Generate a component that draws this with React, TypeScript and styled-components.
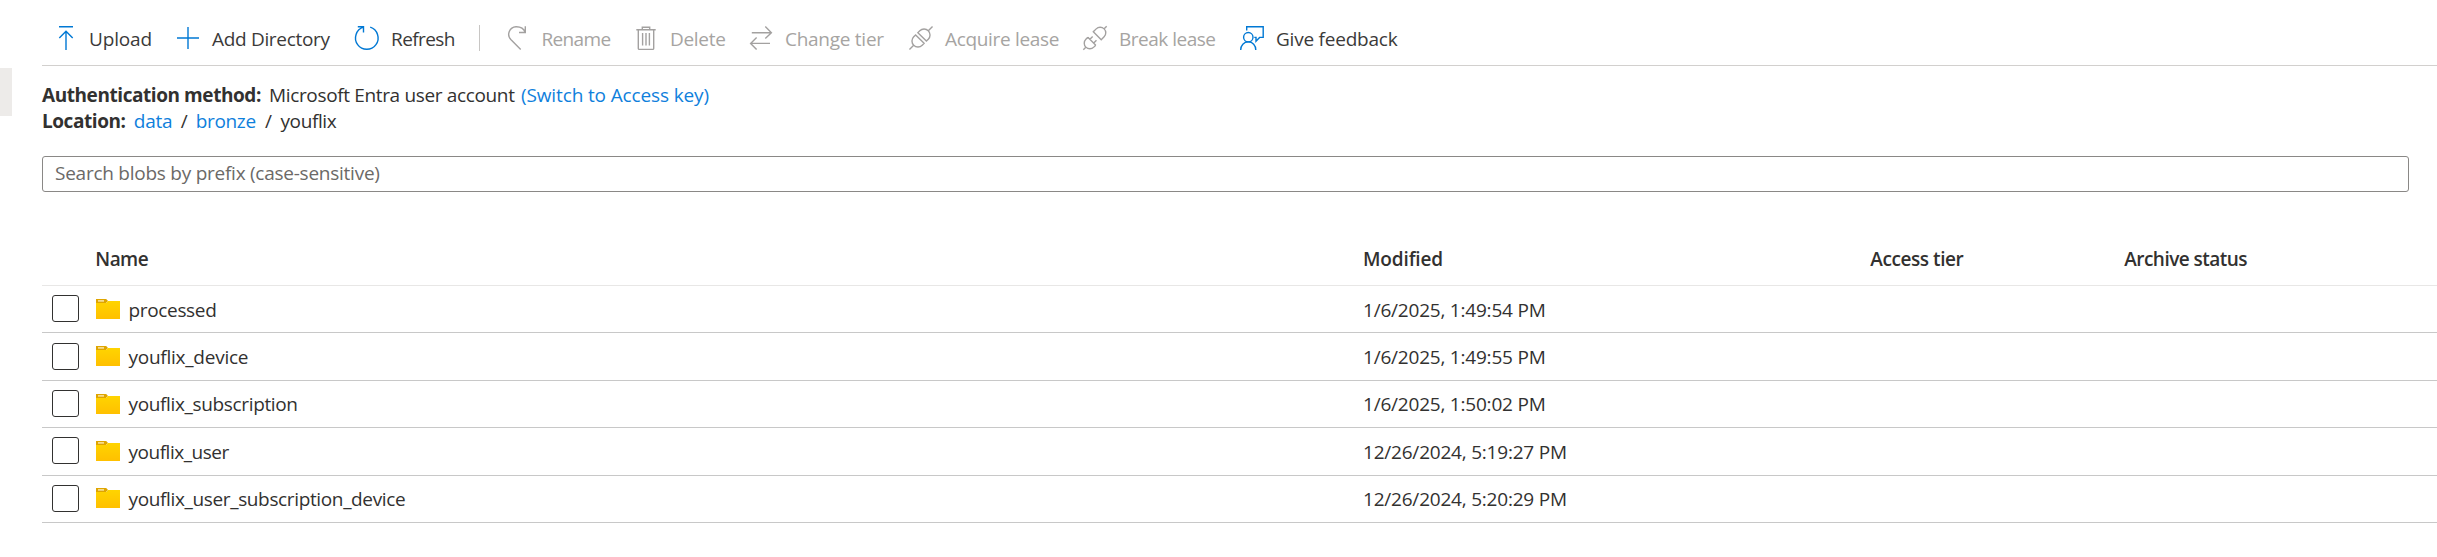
import React from 'react';
import styled, { createGlobalStyle } from 'styled-components';

const GlobalStyle = createGlobalStyle`
  * { box-sizing: border-box; }
  body {
    margin: 0;
    background: #fff;
    color: #323130;
    font: 400 19px/26px 'Open Sans', 'Noto Sans', sans-serif;
    overflow: hidden;
  }
`;

const Page = styled.div`
  display: flex;
  height: 557px;
`;

const Gutter = styled.div`
  flex: 0 0 42px;
  padding-top: 68px;
`;

const CollapseHandle = styled.div`
  width: 12px;
  height: 48px;
  background: #edebe9;
`;

const Content = styled.main`
  flex: 1;
  min-width: 0;
`;

const Label = styled.span<{ $track?: number }>`
  white-space: nowrap;
  letter-spacing: ${(p) => p.$track ?? -0.35}px;
`;

const Toolbar = styled.div`
  display: flex;
  align-items: center;
  height: 66px;
  padding: 11px 0 0 11px;
  border-bottom: 1px solid #d2d0ce;
`;

const Action = styled.div<{ $width: number; $disabled?: boolean }>`
  display: flex;
  align-items: center;
  gap: 12px;
  flex: 0 0 ${(p) => p.$width}px;
  color: ${(p) => (p.$disabled ? '#a6a4a2' : '#3b3a39')};
  ${Label} { padding-top: 1px; }
`;

const ActionIcon = styled.svg<{ $disabled?: boolean }>`
  flex: none;
  width: 24px;
  height: 24px;
  fill: none;
  stroke: ${(p) => (p.$disabled ? '#a3a1a0' : '#0078d4')};
  stroke-width: 1.4;
  overflow: visible;
`;

const Divider = styled.div`
  flex: none;
  width: 1px;
  height: 26px;
  margin-right: 25.5px;
  background: #c8c6c4;
`;

const Info = styled.section`
  padding-top: 16px;
`;

const InfoLine = styled.div`
  display: flex;
  height: 26px;
`;

const Segment = styled(Label)<{ $width?: number; $kind?: 'title' | 'link' }>`
  flex: 0 0 ${(p) => (p.$width ? `${p.$width}px` : 'auto')};
  font-weight: ${(p) => (p.$kind === 'title' ? 700 : 400)};
  color: ${(p) => (p.$kind === 'link' ? '#0f80dc' : '#323130')};
`;

const Search = styled.div`
  display: flex;
  align-items: center;
  height: 36px;
  margin: 22px 28px 0 0;
  padding: 0 0 2px 12px;
  border: 1px solid #8a8886;
  border-radius: 3px;
  color: #6b6967;
`;

const columns = '54px 1267px 507px 254px 1fr';

const HeaderRow = styled.div`
  display: grid;
  grid-template-columns: ${columns};
  height: 94px;
  padding-top: 53.5px;
  border-bottom: 1px solid #e8e7e6;
  font-weight: 600;
`;

const Row = styled.div`
  display: grid;
  grid-template-columns: ${columns};
  align-items: start;
  height: 47.4px;
  border-bottom: 1px solid #c8c8c8;
`;

const Checkbox = styled.div`
  width: 27px;
  height: 27px;
  margin: 9.3px 0 0 10px;
  border: 1px solid #323130;
  border-radius: 3px;
`;

const NameCell = styled.div`
  display: flex;
  align-items: flex-start;
  gap: 8.5px;
`;

const CellText = styled(Label)`
  margin-top: 10.5px;
`;

const HeaderText = styled(Label)<{ $shift?: number }>`
  margin-left: ${(p) => p.$shift ?? 0}px;
`;

const Folder = styled.svg`
  flex: none;
  width: 24px;
  height: 20px;
  margin-top: 12.9px;
`;

const icons = {
  upload: <path d="M6 .7H20M13 24V5.5M6.3 12L13 5.3L19.7 12" />,
  add: <path d="M1 12H23M12 1V23" />,
  refresh: <path d="M15.2 1.2A11.3 11.3 0 1 1 8.4 1.2M2.8 .7H8.5V6.4" />,
  rename: <path d="M14.7 23.5L4.8 13.6A7.6 7.6 0 0 1 10 .8C14.4 .7 18 3 19.2 6.4M19.3 .3V6.5H13" />,
  delete: (
    <>
      <path d="M2.3 3.8H21.7M8.3 3.8V1.2H15.7V3.8M4.3 3.8V22.4Q4.3 23.4 5.3 23.4H18.7Q19.7 23.4 19.7 22.4V3.8" />
      <path d="M8.6 7V19.6M12 7V19.6M15.4 7V19.6" />
    </>
  ),
  tier: <path d="M2.8 6.7H22M16.3 .6L22.4 6.7L16.3 12.6M21 17.4H1.8M7.6 11.5L1.6 17.4L7.6 23.6" />,
  acquire: (
    <g transform="translate(12 12) rotate(-45)">
      <path d="M-16.3 0H-10.3M10.3 0H16.3" />
      <path d="M-1.6 -6H-4.3A6 6 0 0 0 -4.3 6H-1.6ZM1.6 -6H4.3A6 6 0 0 1 4.3 6H1.6Z" />
    </g>
  ),
  break: (
    <g transform="translate(12 12) rotate(-45)">
      <path d="M-16.5 0H-13M13 0H16.5" />
      <path d="M-4.5 -5.6V5.6M-4.5 -5.6H-7.3A5.6 5.6 0 0 0 -7.3 5.6H-4.5M-4.5 -2.7H-.6M-4.5 2.7H-.6" />
      <path d="M3.2 -6.3V6.3M3.2 -5.6H7.3A5.6 5.6 0 0 1 7.3 5.6H3.2" />
    </g>
  ),
  feedback: (
    <>
      <circle cx="8.3" cy="11.2" r="4.7" />
      <path d="M.7 24C.7 19.2 3.9 15.9 8.3 15.9S15.8 19.2 15.8 24M6.7 4.6V.8H23.2V11.4H19.6L16 15.2V11.4H14.3" />
    </>
  ),
};

type Item = { icon: keyof typeof icons; text: string; width: number; track?: number; disabled?: boolean };

const primary: Item[] = [
  { icon: 'upload', text: 'Upload', width: 123, track: -0.15 },
  { icon: 'add', text: 'Add Directory', width: 179, track: -0.32 },
  { icon: 'refresh', text: 'Refresh', width: 124, track: -0.6 },
];

const secondary: Item[] = [
  { icon: 'rename', text: 'Rename', width: 128.5, track: -0.65, disabled: true },
  { icon: 'delete', text: 'Delete', width: 115, track: -0.3, disabled: true },
  { icon: 'tier', text: 'Change tier', width: 160, track: -0.27, disabled: true },
  { icon: 'acquire', text: 'Acquire lease', width: 174, track: -0.33, disabled: true },
  { icon: 'break', text: 'Break lease', width: 157, track: -0.5, disabled: true },
  { icon: 'feedback', text: 'Give feedback', width: 170, track: -0.22 },
];

const rows = [
  { name: 'processed', track: -0.34, modified: '1/6/2025, 1:49:54 PM' },
  { name: 'youflix_device', track: -0.25, modified: '1/6/2025, 1:49:55 PM' },
  { name: 'youflix_subscription', track: -0.35, modified: '1/6/2025, 1:50:02 PM' },
  { name: 'youflix_user', track: -0.48, modified: '12/26/2024, 5:19:27 PM' },
  { name: 'youflix_user_subscription_device', track: -0.36, modified: '12/26/2024, 5:20:29 PM' },
];

const ToolbarAction = ({ item }: { item: Item }) => (
  <Action $width={item.width} $disabled={item.disabled}>
    <ActionIcon viewBox="0 0 24 24" $disabled={item.disabled}>{icons[item.icon]}</ActionIcon>
    <Label $track={item.track}>{item.text}</Label>
  </Action>
);

const FolderIcon = () => (
  <Folder viewBox="0 0 24 20">
    <defs>
      <linearGradient id="folderBody" x1="0" y1="0" x2="0" y2="1">
        <stop offset="0" stopColor="#ffd400" />
        <stop offset="1" stopColor="#ffc000" />
      </linearGradient>
    </defs>
    <path d="M0 0H10.2L12 2L10 4H0Z" fill="#dfa500" />
    <path d="M12 2H24V20H0V4H9.6Q10.6 4 11.2 3Z" fill="url(#folderBody)" />
    <path d="M2 1.2H8V2.6H2Z" fill="#fbe9b0" />
  </Folder>
);

export default function App() {
  return (
    <>
      <GlobalStyle />
      <Page>
        <Gutter>
          <CollapseHandle />
        </Gutter>
        <Content>
          <Toolbar>
            {primary.map((item) => <ToolbarAction key={item.text} item={item} />)}
            <Divider />
            {secondary.map((item) => <ToolbarAction key={item.text} item={item} />)}
          </Toolbar>
          <Info>
            <InfoLine>
              <Segment $kind="title" $width={227} $track={-0.43}>Authentication method:</Segment>
              <Segment $width={252} $track={-0.35}>Microsoft Entra user account</Segment>
              <Segment $kind="link" $track={-0.13}>(Switch to Access key)</Segment>
            </InfoLine>
            <InfoLine>
              <Segment $kind="title" $width={91.8} $track={-0.44}>Location:</Segment>
              <Segment $kind="link" $width={47} $track={-0.22}>data</Segment>
              <Segment $width={15}>/</Segment>
              <Segment $kind="link" $width={69.2}>bronze</Segment>
              <Segment $width={15.5}>/</Segment>
              <Segment $track={-0.4}>youflix</Segment>
            </InfoLine>
          </Info>
          <Search>
            <Label $track={-0.25}>Search blobs by prefix (case-sensitive)</Label>
          </Search>
          <HeaderRow>
            <span />
            <HeaderText $shift={-0.7} $track={-0.55}>Name</HeaderText>
            <HeaderText $track={-0.15}>Modified</HeaderText>
            <HeaderText $shift={0.3} $track={-0.43}>Access tier</HeaderText>
            <HeaderText $shift={0.3} $track={-0.54}>Archive status</HeaderText>
          </HeaderRow>
          {rows.map((row) => (
            <Row key={row.name}>
              <Checkbox />
              <NameCell>
                <FolderIcon />
                <CellText $track={row.track}>{row.name}</CellText>
              </NameCell>
              <CellText $track={-0.21}>{row.modified}</CellText>
            </Row>
          ))}
        </Content>
      </Page>
    </>
  );
}
